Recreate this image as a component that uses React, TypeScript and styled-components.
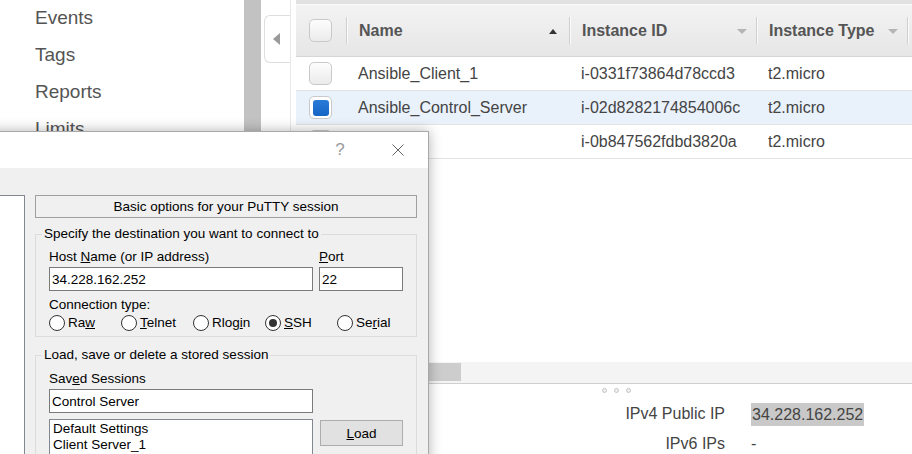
import React from "react";
import styled, { createGlobalStyle } from "styled-components";

const GlobalStyle = createGlobalStyle`
  html, body { margin: 0; padding: 0; background: #fff; }
  body { font-family: "Liberation Sans", Arial, sans-serif; }
  * { box-sizing: border-box; }
`;

const Page = styled.div`
  position: relative;
  width: 912px;
  height: 454px;
  overflow: hidden;
  display: flex;
  background: #fff;
`;

/* ---------- AWS console background ---------- */

const Sidebar = styled.nav`
  width: 244px;
  flex: none;
  padding-left: 35px;
  background: #fff;
`;

const NavItem = styled.div`
  height: 37px;
  line-height: 36px;
  font-size: 19px;
  color: #545454;
`;

const SideScroll = styled.div`
  width: 17px;
  flex: none;
  background: #c2c2c2;
`;

const Gutter = styled.div`
  width: 29px;
  flex: none;
  padding: 15px 0 0 3px;
`;

const CollapseTab = styled.div`
  width: 26px;
  height: 48px;
  border: 1px solid #dedede;
  border-right: none;
  border-radius: 6px 0 0 6px;
  background: #fff;
  display: flex;
  align-items: center;
  justify-content: center;
`;

const TriLeft = styled.span`
  width: 0;
  height: 0;
  border-top: 6px solid transparent;
  border-bottom: 6px solid transparent;
  border-right: 7px solid #9a9a9a;
  margin-right: 2px;
`;

const Main = styled.main`
  flex: 1;
  min-width: 0;
  height: 454px;
  border-left: 1px solid #e8e8e8;
  padding-left: 5px;
  display: flex;
  flex-direction: column;
`;

const cols = "50px 223px 187px 151px 1fr";

const Table = styled.div`
  flex: none;
  border-top: 4px solid #e1e1e1;
`;

const HeaderRow = styled.div`
  display: grid;
  grid-template-columns: ${cols};
  height: 53px;
  border-top: 1px solid #fafafa;
  border-bottom: 1px solid #d6d6d6;
  background: linear-gradient(#f3f3f3, #e6e6e6);
`;

const HeaderCell = styled.div<{ $sep?: boolean }>`
  position: relative;
  display: flex;
  align-items: center;
  justify-content: space-between;
  padding: 1px 9px 0 13px;
  font-weight: bold;
  font-size: 16px;
  color: #555;
  white-space: nowrap;
  &::before {
    content: "";
    display: ${(p) => (p.$sep ? "block" : "none")};
    position: absolute;
    left: 0;
    top: 12px;
    bottom: 12px;
    width: 1px;
    background: #cfcfcf;
    box-shadow: 1px 0 0 #fbfbfb;
  }
`;

const SortUp = styled.span`
  width: 0;
  height: 0;
  border-left: 4px solid transparent;
  border-right: 4px solid transparent;
  border-bottom: 5px solid #333;
  margin-right: 3px;
`;

const SortDown = styled.span`
  width: 0;
  height: 0;
  border-left: 5px solid transparent;
  border-right: 5px solid transparent;
  border-top: 5px solid #b4b4b4;
`;

const Row = styled.div<{ $selected?: boolean }>`
  display: grid;
  grid-template-columns: ${cols};
  align-items: center;
  height: 34px;
  border-bottom: 1px solid #e3e3e3;
  background: ${(p) => (p.$selected ? "#e9f1fb" : "#fff")};
  font-size: 16px;
  color: #444;
`;

const CheckCell = styled.div`
  display: flex;
  align-items: center;
  padding-left: 13px;
`;

const Cell = styled.div`
  padding: 1px 0 0 12px;
  white-space: nowrap;
`;

const Check = styled.span<{ $on?: boolean }>`
  width: 23px;
  height: 23px;
  border: 1px solid #c9c9c9;
  border-radius: 5px;
  background: ${(p) => (p.$on ? "#fff" : "linear-gradient(#fdfdfd, #ebebeb)")};
  display: flex;
  align-items: center;
  justify-content: center;
`;

const CheckFill = styled.span`
  width: 16px;
  height: 16px;
  border-radius: 3px;
  background: linear-gradient(#2a7ad8, #1565c6);
`;

const Spacer = styled.div`
  flex: 1;
`;

const HScroll = styled.div`
  flex: none;
  height: 22px;
  background: #f4f4f4;
  border-bottom: 1px solid #cfcfcf;
  padding: 1px 0 2px 4px;
  display: flex;
`;

const HThumb = styled.div`
  width: 161px;
  background: #cdcdcd;
`;

const DetailPanel = styled.section`
  flex: none;
  height: 70px;
  overflow: hidden;
`;

const Dots = styled.div`
  height: 15px;
  display: flex;
  gap: 7px;
  padding: 4px 0 0 306px;
`;

const Dot = styled.span`
  width: 5px;
  height: 5px;
  border-radius: 50%;
  border: 1px solid #c6c6c6;
  background: #eeeeee;
`;

const DetailGrid = styled.div`
  display: grid;
  grid-template-columns: 429px 1fr;
  column-gap: 26px;
  grid-auto-rows: 30px;
  align-items: center;
  font-size: 16px;
  color: #444;
`;

const DLabel = styled.div`
  text-align: right;
  white-space: nowrap;
`;

const DValue = styled.div`
  white-space: nowrap;
`;

const Highlight = styled.span`
  background: #c9c9c9;
  padding: 3px 1px;
  line-height: 19px;
`;

/* ---------- PuTTY window ---------- */

const Window = styled.div`
  position: absolute;
  left: -20px;
  top: 131px;
  width: 449px;
  height: 340px;
  background: #f0f0f0;
  border: 1px solid #a8a8a8;
  box-shadow: 0 0 12px rgba(0, 0, 0, 0.3);
  font-family: "Liberation Sans", Arial, sans-serif;
  font-size: 13.5px;
  color: #000;
`;

const TitleBar = styled.div`
  height: 36px;
  background: #fff;
  display: flex;
  justify-content: flex-end;
  align-items: center;
  gap: 12px;
  padding-right: 7px;
`;

const TitleButton = styled.div`
  width: 46px;
  height: 36px;
  display: flex;
  align-items: center;
  justify-content: center;
  color: #9a9a9a;
  font-size: 17px;
`;

const WinBody = styled.div`
  display: flex;
  gap: 10px;
  padding: 27px 11px 0 6px;
  height: 302px;
`;

const Tree = styled.div`
  width: 38px;
  flex: none;
  background: #fff;
  border: 1px solid #828790;
`;

const RightCol = styled.div`
  width: 382px;
  flex: none;
  display: flex;
  flex-direction: column;
`;

const Banner = styled.div`
  height: 23px;
  border: 1px solid #a0a0a0;
  text-align: center;
  line-height: 21px;
`;

const Group = styled.fieldset<{ $mt: number }>`
  margin: ${(p) => p.$mt}px 0 0 0;
  padding: 0 13px 5px 13px;
  border: 1px solid #dcdcdc;
  min-width: 0;
`;

const Legend = styled.legend`
  padding: 0 2px;
  margin-left: -7px;
  line-height: 16px;
`;

const Label = styled.div<{ $mt?: number }>`
  line-height: 16px;
  margin-top: ${(p) => p.$mt ?? 0}px;
  white-space: nowrap;
`;

const Key = styled.span`
  text-decoration: underline;
`;

const FieldRow = styled.div`
  display: grid;
  grid-template-columns: 264px 84px;
  column-gap: 6px;
  margin-top: 7px;
`;

const TextBox = styled.input`
  display: block;
  width: 100%;
  height: 24px;
  margin: 2px 0 0 0;
  padding: 0 2px;
  border: 1px solid #7a7a7a;
  background: #fff;
  font: inherit;
  color: #000;
  outline: none;
`;

const RadioRow = styled.div`
  display: grid;
  grid-template-columns: repeat(5, 72px);
  height: 16px;
  margin-top: 2px;
`;

const RadioItem = styled.label`
  display: flex;
  align-items: center;
  gap: 3px;
  white-space: nowrap;
  line-height: 16px;
`;

const RadioCircle = styled.span<{ $on?: boolean }>`
  width: 16px;
  height: 16px;
  flex: none;
  border-radius: 50%;
  border: 1px solid #333;
  background: #fff;
  display: flex;
  align-items: center;
  justify-content: center;
  &::after {
    content: "";
    display: ${(p) => (p.$on ? "block" : "none")};
    width: 8px;
    height: 8px;
    border-radius: 50%;
    background: #333;
  }
`;

const SessionRow = styled.div`
  display: flex;
  gap: 7px;
  margin-top: 6px;
`;

const ListBox = styled.div`
  width: 264px;
  height: 80px;
  flex: none;
  background: #fff;
  border: 1px solid #828790;
  padding: 1px 3px;
  line-height: 16px;
`;

const Button = styled.div`
  width: 83px;
  height: 26px;
  margin-top: 1px;
  background: #e1e1e1;
  border: 1px solid #adadad;
  display: flex;
  align-items: center;
  justify-content: center;
`;

const CloseIcon = () => (
  <svg width="12" height="12" viewBox="0 0 12 12">
    <path d="M0.5 0.5 L11.5 11.5 M11.5 0.5 L0.5 11.5" stroke="#666" strokeWidth="1" fill="none" />
  </svg>
);

const rows = [
  { name: "Ansible_Client_1", id: "i-0331f73864d78ccd3", type: "t2.micro", sel: false },
  { name: "Ansible_Control_Server", id: "i-02d8282174854006c", type: "t2.micro", sel: true },
  { name: "", id: "i-0b847562fdbd3820a", type: "t2.micro", sel: false },
];

export default function App() {
  return (
    <>
      <GlobalStyle />
      <Page>
        <Sidebar>
          <NavItem>Events</NavItem>
          <NavItem>Tags</NavItem>
          <NavItem>Reports</NavItem>
          <NavItem>Limits</NavItem>
        </Sidebar>
        <SideScroll />
        <Gutter>
          <CollapseTab>
            <TriLeft />
          </CollapseTab>
        </Gutter>
        <Main>
          <Table>
            <HeaderRow>
              <CheckCell>
                <Check />
              </CheckCell>
              <HeaderCell $sep>
                Name <SortUp />
              </HeaderCell>
              <HeaderCell $sep>
                Instance ID <SortDown />
              </HeaderCell>
              <HeaderCell $sep>
                Instance Type <SortDown />
              </HeaderCell>
              <HeaderCell $sep />
            </HeaderRow>
            {rows.map((r) => (
              <Row key={r.id} $selected={r.sel}>
                <CheckCell>
                  <Check $on={r.sel}>{r.sel && <CheckFill />}</Check>
                </CheckCell>
                <Cell>{r.name}</Cell>
                <Cell>{r.id}</Cell>
                <Cell>{r.type}</Cell>
                <Cell />
              </Row>
            ))}
          </Table>
          <Spacer />
          <HScroll>
            <HThumb />
          </HScroll>
          <DetailPanel>
            <Dots>
              <Dot />
              <Dot />
              <Dot />
            </Dots>
            <DetailGrid>
              <DLabel>IPv4 Public IP</DLabel>
              <DValue>
                <Highlight>34.228.162.252</Highlight>
              </DValue>
              <DLabel>IPv6 IPs</DLabel>
              <DValue>-</DValue>
            </DetailGrid>
          </DetailPanel>
        </Main>

        <Window>
          <TitleBar>
            <TitleButton>?</TitleButton>
            <TitleButton>
              <CloseIcon />
            </TitleButton>
          </TitleBar>
          <WinBody>
            <Tree />
            <RightCol>
              <Banner>Basic options for your PuTTY session</Banner>
              <Group $mt={8}>
                <Legend>Specify the destination you want to connect to</Legend>
                <FieldRow>
                  <div>
                    <Label>
                      Host <Key>N</Key>ame (or IP address)
                    </Label>
                    <TextBox readOnly value="34.228.162.252" />
                  </div>
                  <div>
                    <Label>
                      <Key>P</Key>ort
                    </Label>
                    <TextBox readOnly value="22" />
                  </div>
                </FieldRow>
                <Label $mt={6}>Connection type:</Label>
                <RadioRow>
                  <RadioItem>
                    <RadioCircle />
                    <span>
                      Ra<Key>w</Key>
                    </span>
                  </RadioItem>
                  <RadioItem>
                    <RadioCircle />
                    <span>
                      <Key>T</Key>elnet
                    </span>
                  </RadioItem>
                  <RadioItem>
                    <RadioCircle />
                    <span>
                      Rlog<Key>i</Key>n
                    </span>
                  </RadioItem>
                  <RadioItem>
                    <RadioCircle $on />
                    <span>
                      <Key>S</Key>SH
                    </span>
                  </RadioItem>
                  <RadioItem>
                    <RadioCircle />
                    <span>
                      Se<Key>r</Key>ial
                    </span>
                  </RadioItem>
                </RadioRow>
              </Group>
              <Group $mt={10}>
                <Legend>Load, save or delete a stored session</Legend>
                <Label $mt={8}>
                  Sav<Key>e</Key>d Sessions
                </Label>
                <TextBox readOnly value="Control Server" style={{ width: 264 }} />
                <SessionRow>
                  <ListBox>
                    <div>Default Settings</div>
                    <div>Client Server_1</div>
                  </ListBox>
                  <Button>
                    <span>
                      <Key>L</Key>oad
                    </span>
                  </Button>
                </SessionRow>
              </Group>
            </RightCol>
          </WinBody>
        </Window>
      </Page>
    </>
  );
}
